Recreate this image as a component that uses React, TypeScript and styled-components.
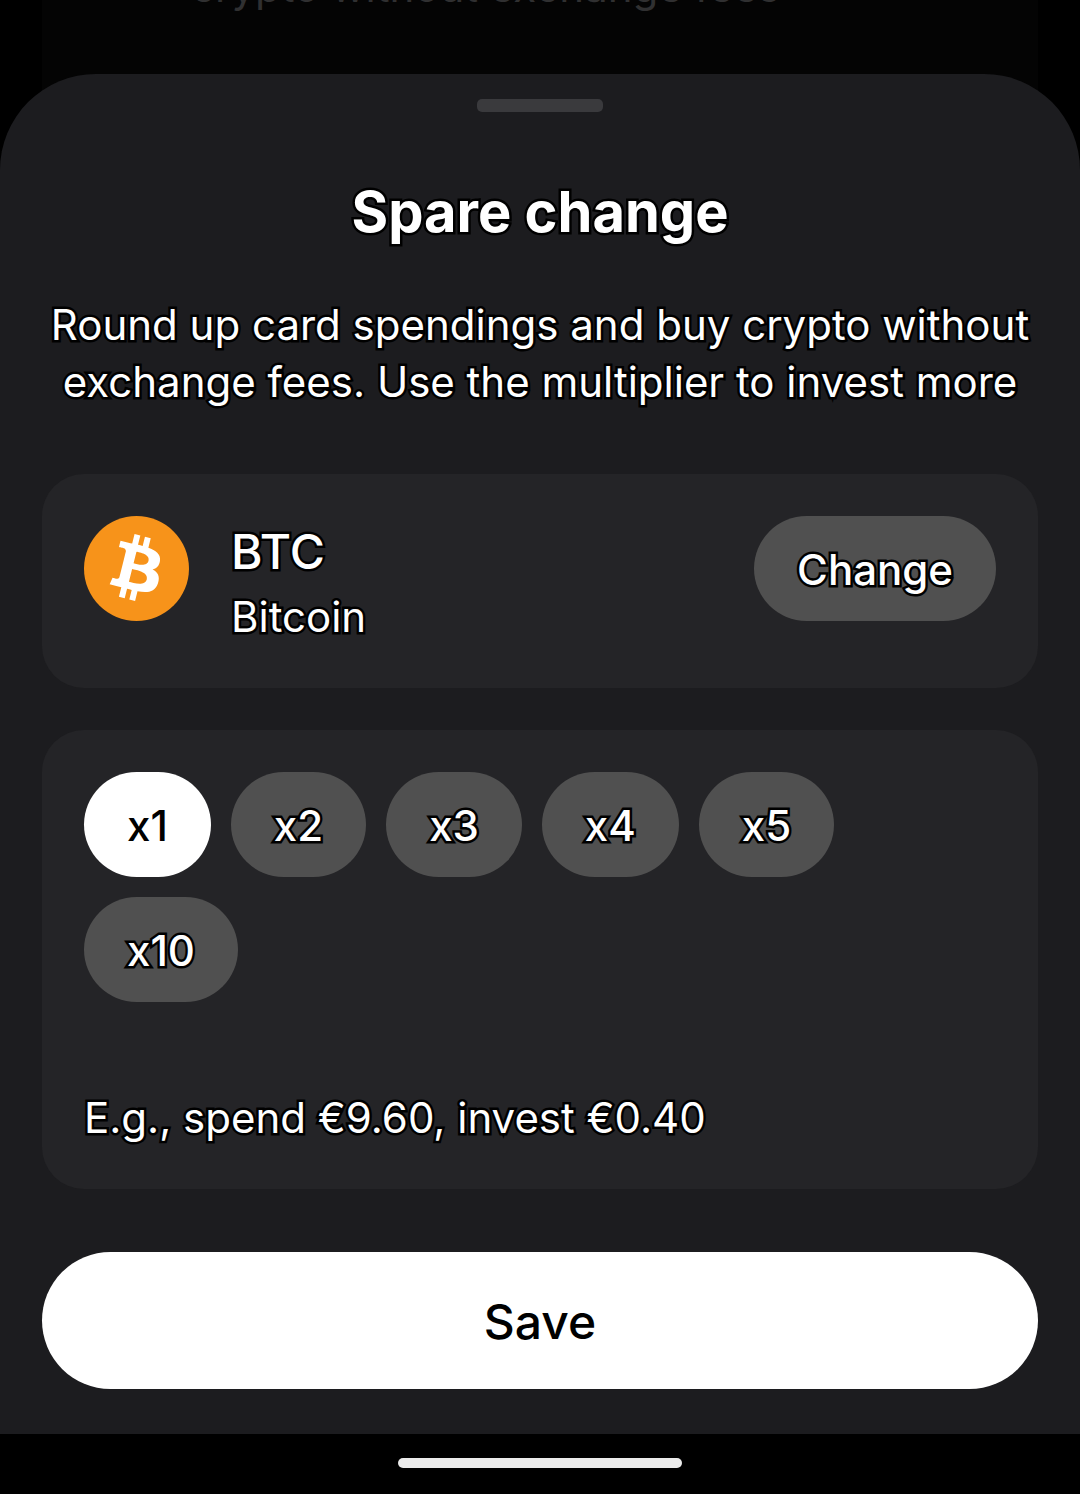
import React, { useState } from "react";
import styled, { createGlobalStyle, css } from "styled-components";

const GlobalStyle = createGlobalStyle`
  * { box-sizing: border-box; }
  body {
    margin: 0;
    background: #000000;
    color: #ffffff;
    font-family: Inter, "Liberation Sans", sans-serif;
  }
  button { font-family: inherit; border: 0; margin: 0; cursor: pointer; }
`;

const outlined = css`
  color: #ffffff;
  -webkit-text-stroke: 5px #000000;
  paint-order: stroke fill;
  stroke-linejoin: round;
`;

const Screen = styled.div`
  display: flex;
  flex-direction: column;
  min-height: 100vh;
`;

const Backdrop = styled.div`
  display: flex;
  align-items: flex-end;
  height: 170px;
  padding: 0 42px;
  overflow: hidden;
`;

const BackdropCard = styled.div`
  flex: 1;
  padding: 0 42px 154px 149px;
  background: #040404;
`;

const BackdropText = styled.p`
  margin: 0;
  color: #303031;
  font-size: 42px;
  line-height: 58px;
`;

const Sheet = styled.main`
  display: flex;
  flex-direction: column;
  align-items: stretch;
  margin-top: -96px;
  padding: 25px 42px 45px;
  border-radius: 96px 96px 0 0;
  background: #1c1c1f;
`;

const Handle = styled.div`
  align-self: center;
  width: 126px;
  height: 13px;
  border-radius: 5px;
  background: #3a3a3d;
`;

const Title = styled.h1`
  ${outlined}
  margin: 64px 0 0;
  font-size: 56px;
  font-weight: 700;
  line-height: 72px;
  text-align: center;
`;

const Lead = styled.p`
  ${outlined}
  margin: 48px -42px 0;
  font-size: 42px;
  line-height: 57px;
  text-align: center;
`;

const Card = styled.section`
  padding: 42px;
  border-radius: 42px;
  background: #242427;
`;

const AssetCard = styled(Card)`
  display: flex;
  align-items: flex-start;
  gap: 42px;
  margin-top: 64px;
`;

const CoinIcon = styled.svg`
  flex: none;
  width: 105px;
  height: 105px;
`;

const AssetNames = styled.div`
  display: flex;
  flex: 1;
  flex-direction: column;
  gap: 3px;
  padding-top: 3px;
`;

const Ticker = styled.div`
  ${outlined}
  font-size: 48px;
  font-weight: 500;
  line-height: 66px;
`;

const AssetName = styled.div`
  ${outlined}
  font-size: 42px;
  line-height: 58px;
`;

const Pill = styled.button<{ $selected?: boolean }>`
  ${outlined}
  height: 105px;
  padding: 2px 43px 0;
  border-radius: 53px;
  background: #505050;
  font-size: 42px;
  font-weight: 500;
  line-height: 58px;
  ${(p) =>
    p.$selected &&
    css`
      background: #ffffff;
      color: #000000;
      -webkit-text-stroke: 0;
    `}
`;

const MultiplierCard = styled(Card)`
  margin-top: 42px;
`;

const Multipliers = styled.div`
  display: flex;
  flex-wrap: wrap;
  gap: 20px;
`;

const Example = styled.p`
  ${outlined}
  margin: 87px 0 0;
  font-size: 42px;
  line-height: 58px;
`;

const SaveButton = styled.button`
  height: 137px;
  margin-top: 63px;
  padding: 2px 42px 0;
  border-radius: 69px;
  background: #ffffff;
  color: #000000;
  font-size: 48px;
  font-weight: 500;
  line-height: 66px;
`;

const NavigationBar = styled.footer`
  display: flex;
  justify-content: center;
  height: 60px;
  padding-top: 24px;
  background: #000000;
`;

const HomeIndicator = styled.div`
  width: 284px;
  height: 10px;
  border-radius: 5px;
  background: #ebebeb;
`;

const multipliers = [1, 2, 3, 4, 5, 10];

function Bitcoin() {
  return (
    <CoinIcon viewBox="0 0 32 32" aria-hidden="true">
      <circle cx="16" cy="16" r="16" fill="#f7931a" />
      <path
        fill="#ffffff"
        transform="translate(-0.5 -0.6) scale(1.02)"
        d="M23.189 14.02c.314-2.096-1.283-3.223-3.465-3.975l.708-2.84-1.728-.43-.69 2.765c-.454-.114-.92-.22-1.385-.326l.695-2.783L15.596 6l-.708 2.839c-.376-.086-.746-.17-1.104-.26l.002-.009-2.384-.595-.46 1.846s1.283.294 1.256.312c.7.175.826.638.805 1.006l-.806 3.235c.048.012.11.03.18.057l-.183-.045-1.13 4.532c-.086.212-.303.531-.793.41.018.025-1.256-.313-1.256-.313l-.858 1.978 2.25.561c.418.105.828.215 1.231.318l-.715 2.872 1.727.43.708-2.84c.472.127.93.245 1.378.357l-.706 2.828 1.728.43.715-2.866c2.948.558 5.164.333 6.097-2.333.752-2.146-.037-3.385-1.588-4.192 1.13-.26 1.98-1.003 2.207-2.538zm-3.95 5.538c-.533 2.147-4.148.986-5.32.695l.95-3.805c1.172.293 4.929.872 4.37 3.11zm.535-5.569c-.487 1.953-3.495.96-4.47.717l.86-3.45c.975.243 4.118.696 3.61 2.733z"
      />
    </CoinIcon>
  );
}

export default function App() {
  const [selected, setSelected] = useState(1);
  return (
    <>
      <GlobalStyle />
      <Screen>
        <Backdrop>
          <BackdropCard>
            <BackdropText>crypto without exchange fees</BackdropText>
          </BackdropCard>
        </Backdrop>
        <Sheet>
          <Handle />
          <Title>Spare change</Title>
          <Lead>
            Round up card spendings and buy crypto without
            <br />
            exchange fees. Use the multiplier to invest more
          </Lead>
          <AssetCard>
            <Bitcoin />
            <AssetNames>
              <Ticker>BTC</Ticker>
              <AssetName>Bitcoin</AssetName>
            </AssetNames>
            <Pill type="button">Change</Pill>
          </AssetCard>
          <MultiplierCard>
            <Multipliers role="group" aria-label="Multiplier">
              {multipliers.map((m) => (
                <Pill
                  key={m}
                  type="button"
                  $selected={m === selected}
                  aria-pressed={m === selected}
                  onClick={() => setSelected(m)}
                >
                  {`x${m}`}
                </Pill>
              ))}
            </Multipliers>
            <Example>E.g., spend €9.60, invest €0.40</Example>
          </MultiplierCard>
          <SaveButton type="button">Save</SaveButton>
        </Sheet>
        <NavigationBar>
          <HomeIndicator />
        </NavigationBar>
      </Screen>
    </>
  );
}
